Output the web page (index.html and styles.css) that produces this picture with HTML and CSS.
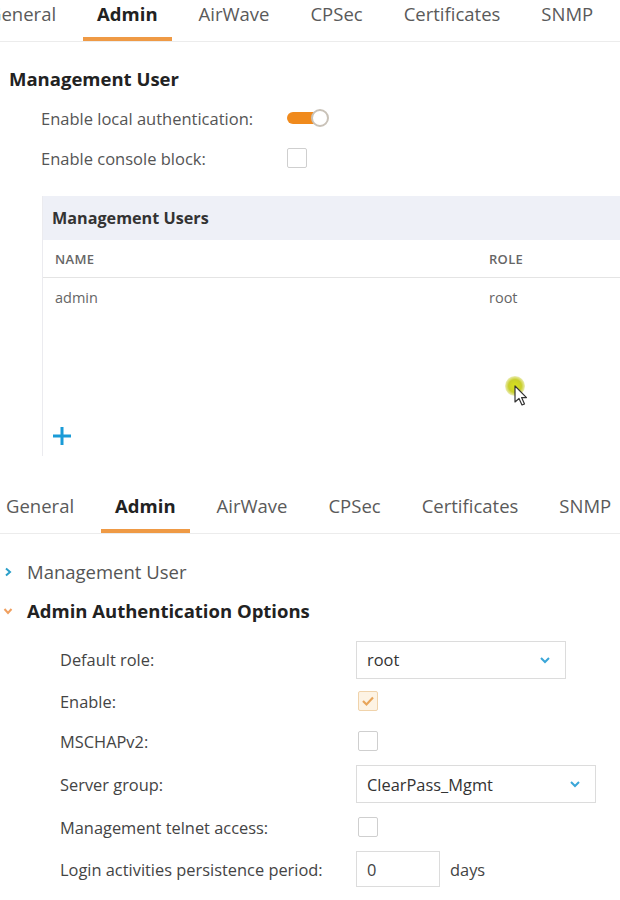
FILE: index.html
```html
<!DOCTYPE html>
<html>
<head>
<meta charset="utf-8">
<link rel="stylesheet" href="styles.css">
</head>
<body>
<div class="shot shot-top">
  <nav class="tabs tabs-top">
    <span class="tab">General</span>
    <span class="tab active">Admin</span>
    <span class="tab">AirWave</span>
    <span class="tab">CPSec</span>
    <span class="tab">Certificates</span>
    <span class="tab">SNMP</span>
  </nav>
  <h2 class="section-title">Management User</h2>
  <div class="opt-rows">
    <div class="opt-row">
      <span class="opt-label">Enable local authentication:</span>
      <span class="toggle"><span class="knob"></span></span>
    </div>
    <div class="opt-row">
      <span class="opt-label">Enable console block:</span>
      <span class="checkbox"></span>
    </div>
  </div>
  <div class="panel">
    <div class="panel-head">Management Users</div>
    <div class="trow thead"><span class="c-name">NAME</span><span class="c-role">ROLE</span></div>
    <div class="trow tbody"><span class="c-name">admin</span><span class="c-role">root</span></div>
    <div class="panel-space">
      <span class="cursor">
        <span class="halo"></span>
        <svg width="16" height="22" viewBox="0 0 16 22"><path d="M1 1 L1 17 L5 13.5 L8 20 L10.5 19 L7.6 12.6 L12.5 12.6 Z" fill="#fff" stroke="#333" stroke-width="1.2" stroke-linejoin="round"/></svg>
      </span>
    </div>
    <div class="add">
      <svg width="20" height="20" viewBox="0 0 20 20"><path d="M10 1 V19 M1 10 H19" stroke="#1a9bd7" stroke-width="3"/></svg>
    </div>
  </div>
</div>

<div class="shot shot-bottom">
  <nav class="tabs tabs-bottom">
    <span class="tab">General</span>
    <span class="tab active">Admin</span>
    <span class="tab">AirWave</span>
    <span class="tab">CPSec</span>
    <span class="tab">Certificates</span>
    <span class="tab">SNMP</span>
  </nav>
  <div class="acc acc-closed">
    <svg class="chev" width="10" height="10" viewBox="0 0 10 10"><path d="M3 1.5 L7 5 L3 8.5" fill="none" stroke="#2a9fc9" stroke-width="2"/></svg>
    <span>Management User</span>
  </div>
  <div class="acc acc-open">
    <svg class="chev" width="10" height="10" viewBox="0 0 10 10"><path d="M1.5 3 L5 7 L8.5 3" fill="none" stroke="#f0a060" stroke-width="2"/></svg>
    <span>Admin Authentication Options</span>
  </div>
  <div class="form">
    <span class="f-label">Default role:</span>
    <span class="select sel-role"><span>root</span><svg width="12" height="8" viewBox="0 0 12 8"><path d="M2 2 L6 6 L10 2" fill="none" stroke="#3aa6d8" stroke-width="2"/></svg></span>

    <span class="f-label">Enable:</span>
    <span class="checkbox checked"><svg width="14" height="12" viewBox="0 0 14 12"><path d="M2 6 L5.5 9.5 L12 2.5" fill="none" stroke="#e8a55a" stroke-width="2.2"/></svg></span>

    <span class="f-label">MSCHAPv2:</span>
    <span class="checkbox"></span>

    <span class="f-label">Server group:</span>
    <span class="select sel-group"><span>ClearPass_Mgmt</span><svg width="12" height="8" viewBox="0 0 12 8"><path d="M2 2 L6 6 L10 2" fill="none" stroke="#3aa6d8" stroke-width="2"/></svg></span>

    <span class="f-label">Management telnet access:</span>
    <span class="checkbox"></span>

    <span class="f-label">Login activities persistence period:</span>
    <span class="days"><span class="num">0</span><span class="unit">days</span></span>
  </div>
</div>
</body>
</html>
```

FILE: styles.css
```css
* { box-sizing: border-box; }
html, body { margin: 0; padding: 0; background: #fff; }
body {
  width: 620px;
  height: 900px;
  overflow: hidden;
  font-family: "Open Sans", "Noto Sans", sans-serif;
  color: #555;
}

.shot-top { height: 466px; }
.shot-bottom { height: 434px; }

/* tabs */
.tabs {
  display: flex;
  align-items: flex-start;
  white-space: nowrap;
  border-bottom: 1px solid #ececec;
}
.tab {
  font-size: 18.5px;
  color: #5a5a5a;
  padding: 0 14px;
  margin-right: 13px;
  line-height: 28px;
  height: 41px;
  border-bottom: 4px solid transparent;
}
.tab.active {
  font-weight: 700;
  color: #222;
  border-bottom-color: #ef9a45;
}
.tabs-top { margin-left: -26px; }
.tabs-bottom { margin-top: 12px; margin-left: -8px; padding-top: 14px; }

/* top section */
.section-title {
  margin: 22px 0 0 9px;
  font-size: 18.5px;
  font-weight: 700;
  color: #222;
  line-height: 30px;
}
.opt-rows { margin: 4px 0 0 41px; }
.opt-row {
  display: flex;
  align-items: center;
  height: 40px;
}
.opt-label {
  width: 246px;
  font-size: 16.5px;
  color: #555;
}
.toggle {
  position: relative;
  width: 42px;
  height: 16px;
  display: inline-block;
}
.toggle::before {
  content: "";
  position: absolute;
  left: 0; top: 2px;
  width: 32px; height: 12px;
  border-radius: 6px;
  background: #f08a1c;
}
.knob {
  position: absolute;
  right: 0; top: -1px;
  width: 18px; height: 18px;
  border-radius: 50%;
  background: #fff;
  border: 2px solid #c9c2b8;
}
.checkbox {
  width: 20px; height: 20px;
  border: 1px solid #cfcfcf;
  border-radius: 2px;
  background: #fff;
  display: inline-flex;
  align-items: center;
  justify-content: center;
}
.checkbox.checked {
  background: #fdf3e4;
  border-color: #f0d3ab;
}

.panel {
  margin: 18px 0 0 42px;
  border-left: 1px solid #ebebef;
}
.panel-head {
  background: #eef0f7;
  height: 44px;
  padding-left: 9px;
  display: flex;
  align-items: center;
  font-size: 16.2px;
  font-weight: 700;
  color: #333;
}
.trow {
  display: flex;
  align-items: center;
  padding-left: 12px;
}
.thead {
  font-size: 13px;
  font-weight: 600;
  color: #666;
  letter-spacing: 0.3px;
  border-bottom: 1px solid #e4e4e4;
  height: 38px;
}
.tbody { font-size: 14.5px; color: #666; height: 38px; }
.c-name { width: 434px; }
.panel-space { height: 110px; position: relative; }
.cursor {
  position: absolute;
  left: 471px;
  top: 69px;
  width: 16px;
  height: 22px;
}
.halo {
  position: absolute;
  left: -9px; top: -9px;
  width: 20px; height: 20px;
  border-radius: 50%;
  background: radial-gradient(circle, #d9e21a 0%, #c9cf2c 45%, rgba(200,205,60,0.25) 75%, rgba(200,205,60,0) 100%);
}
.cursor svg { position: absolute; left: 0; top: 0; }
.add { padding-left: 9px; height: 30px; }

/* accordion */
.acc {
  display: flex;
  align-items: center;
  height: 39px;
  font-size: 18.5px;
  padding-left: 3px;
}
.acc .chev { margin-right: 14px; }
.acc-closed { margin-top: 18px; color: #555; }
.acc-open { font-weight: 700; color: #222; }

/* form */
.form {
  display: grid;
  grid-template-columns: 296px 1fr;
  grid-template-rows: 43px 40px 40px 46px 40px 44px;
  align-items: center;
  margin: 8px 0 0 60px;
}
.f-label { font-size: 16.4px; color: #444; }
.select {
  height: 38px;
  border: 1px solid #dcdcdc;
  background: #fff;
  display: flex;
  align-items: center;
  justify-content: space-between;
  padding: 0 14px 0 10px;
  font-size: 16.4px;
  color: #333;
}
.sel-role { width: 210px; }
.sel-group { width: 240px; }
.form .checkbox { margin-left: 2px; }
.days { display: flex; align-items: center; font-size: 16.4px; color: #444; }
.num {
  width: 84px; height: 36px;
  border: 1px solid #dcdcdc;
  display: flex; align-items: center;
  padding-left: 10px;
  margin-right: 10px;
}
```
